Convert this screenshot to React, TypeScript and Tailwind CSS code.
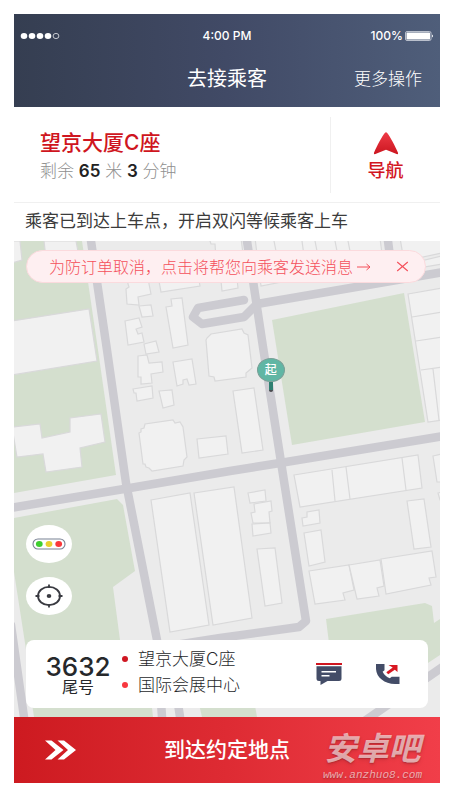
import React from "react";

// ── Map data ─────────────────────────────────────────────────────────────
const PARKS = [
  "14,241 82,241 98,350 116,475 14,493",
  "272,320 404,293 425,422 292,445",
  "14,518 117,499 123,505 135,571 113,587 120,640 128,690 32,690 25,643 14,572",
  "326,619 425,603 432,606 434,623 440,619 440,655 372,700 336,700",
  "30,690 150,690 153,717 34,717",
  "198,700 254,700 257,717 202,717",
];

const ROADS = [
  "M91,241 L107,350 L126,483 L157,640 L162,717",
  "M170,650 L180,717",
  "M10,508 L124,489 L230,471 L280,463 L444,436",
  "M244,300 L198,308 L193,317 L202,324 L244,317 L257,304 L444,272",
  "M247,241 L263,347 L281,462 L306,621 L299,627 L220,638 L150,649",
  "M388,241 L393,280",
  "M444,666 L366,720",
  "M11,625 L24,717",
];

const BUILDINGS = [
  "12,241 20,241 22,260 12,263",
  "44,241 76,241 80,262 47,267",
  "12,321 89,309 97,361 12,375",
  "12,427 40,424 42,438 70,432 70,418 101,414 105,442 80,448 82,467 46,472 43,454 17,457",
  "126,270 128,284 129,287 126,289 127,304 139,305 138,297 151,294 149,284 148,270",
  "157,270 161,292 200,286 197,270",
  "139,306 151,305 153,316 142,317",
  "125,321 139,318 142,327 136,329 138,334 142,333 144,342 128,345",
  "144,344 156,341 159,352 146,354",
  "166,307 172,306 171,299 182,298 188,345 173,348",
  "138,356 147,355 149,363 162,362 163,372 151,374 152,383 141,384 141,377 138,377",
  "133,389 152,386 153,398 137,401 136,393 134,393",
  "173,362 192,359 196,384 189,385 187,379 183,380 183,384 177,386",
  "159,391 172,390 174,405 163,408",
  "139,433 141,432 141,429 144,428 145,424 173,420 175,423 180,422 183,427 187,457 184,460 183,466 152,471 149,468 146,467 145,464 143,464",
  "197,439 226,436 228,454 199,458",
  "206,340 207,338 211,334 242,329 244,333 248,335 252,368 246,373 246,377 215,381 214,377 209,376",
  "233,391 254,388 263,450 242,453",
  "151,500 190,493 209,625 170,632",
  "194,493 234,487 252,618 213,625",
  "248,493 265,490 266,501 250,503",
  "254,504 271,501 272,511 269,512 270,523 253,523 251,513 255,512",
  "252,524 270,523 271,533 253,536",
  "257,549 275,548 282,603 265,606",
  "302,518 307,517 307,512 319,510 320,523 303,526",
  "304,533 321,530 325,562 309,566",
  "407,501 424,499 431,547 414,549",
  "294,475 418,455 422,488 300,507",
  "309,571 349,565 354,590 343,593 345,600 315,604",
  "349,565 380,560 384,586 377,588 379,596 357,599",
  "381,559 432,551 436,577 429,578 431,585 386,594",
  "433,456 442,454 442,482 437,482",
  "438,493 442,492 442,500 440,500",
  "408,294 442,288 442,420 428,422",
  "209,238 211,244 215,244 216,258 244,262 241,238",
  "220,270 222,291 238,288 236,270",
  "255,238 380,238 383,262 261,286",
  "400,238 442,238 442,253 404,261",
  "404,265 442,256 442,264 406,270",
];

const WALLS =
  "M332,470 L335,501 M346,467 L350,499 M402,458 L406,490 M412,317 L442,312 M416,341 L442,337 M421,370 L442,367 M433,369 L439,420 M274,241 L277,256 M302,241 L304,256 M315,241 L318,256 M335,241 L338,256 M348,241 L351,256";

const STOPS = [
  { name: "望京大厦C座", dot: "bg-[#cf1722]" },
  { name: "国际会展中心", dot: "bg-[#f8383f]" },
];

const MapCanvas: React.FC = () => (
  <svg
    viewBox="14 241 426 476"
    preserveAspectRatio="xMidYMid slice"
    className="absolute inset-0 h-full w-full bg-[#ebebeb]"
    aria-hidden="true"
  >
    {PARKS.map((points) => (
      <polygon key={points} points={points} fill="#d4dfce" />
    ))}
    <g fill="none" stroke="#cccbd1" strokeWidth="8.5" strokeLinecap="round" strokeLinejoin="round">
      {ROADS.map((d) => (
        <path key={d} d={d} />
      ))}
    </g>
    <g fill="#f1f1f1" stroke="#d9d9da" strokeWidth="1.2">
      {BUILDINGS.map((points) => (
        <polygon key={points} points={points} />
      ))}
      <path d={WALLS} />
    </g>
  </svg>
);

const PickupPin: React.FC = () => (
  <div className="absolute left-[57%] top-[24.5%] flex flex-col items-center">
    <span className="z-10 flex h-6 w-7 items-center justify-center rounded-[50%] border border-[#7b9f97] bg-[#60b6a4] text-xs font-medium text-white">
      起
    </span>
    <span className="h-2.5 w-1 rounded-b-sm border-b-2 border-[#4b4b4f] bg-[#2f8071]" />
  </div>
);

// ── Header ───────────────────────────────────────────────────────────────
const Header: React.FC = () => (
  <header className="bg-linear-to-r from-[#353e51] via-[#414a66] to-[#4f5e7a] text-white">
    <div className="grid grid-cols-3 items-center px-1.5 pt-3 text-xs leading-5 font-medium">
      <svg width="40" height="8" viewBox="0 0 40 8" fill="#fff" aria-hidden="true">
        <ellipse cx="4" cy="4" rx="3.3" ry="3" />
        <ellipse cx="12" cy="4" rx="3.3" ry="3" />
        <ellipse cx="20" cy="4" rx="3.3" ry="3" />
        <ellipse cx="28" cy="4" rx="3.3" ry="3" />
        <ellipse cx="36" cy="4" rx="2.9" ry="2.6" fill="none" stroke="#fff" strokeWidth="0.7" />
      </svg>
      <span className="text-center">4:00 PM</span>
      <span className="flex items-center justify-end gap-0.5">
        100%
        <svg width="29" height="10" viewBox="0 0 29 10" aria-hidden="true">
          <rect x="0.5" y="0.5" width="25.5" height="9" rx="1.5" fill="none" stroke="#d5d9e2" strokeWidth="0.8" />
          <rect x="1.5" y="1.5" width="23.5" height="7" rx="0.5" fill="#fff" />
          <path d="M27 3.5 Q29 5 27 6.5Z" fill="#fff" />
        </svg>
      </span>
    </div>
    <div className="grid grid-cols-[1fr_auto_1fr] items-center px-[18px] pt-[17px] pb-3">
      <span />
      <h1 className="text-xl leading-8">去接乘客</h1>
      <button type="button" className="justify-self-end text-[17px] leading-8 font-light">
        更多操作
      </button>
    </div>
  </header>
);

const TripSummary: React.FC = () => (
  <section className="flex items-stretch border-b border-[#f0f0f0] pt-2.5 pb-[9px]">
    <div className="flex-1 pt-3 pb-2 pl-[26px]">
      <h2 className="text-[21px] leading-7 font-medium text-[#cf1520]">望京大厦C座</h2>
      <p className="text-[17px] leading-7 font-light text-[#8f8f8f]">
        剩余 <b className="text-[17px] font-semibold text-[#222]">65</b> 米{" "}
        <b className="text-[17px] font-semibold text-[#222]">3</b> 分钟
      </p>
    </div>
    <button
      type="button"
      className="flex w-[110px] flex-col items-center justify-center gap-0.5 border-l border-[#f0f0f0] pt-1.5 text-lg leading-7 font-medium text-[#d2161f]"
    >
      <svg width="26" height="23" viewBox="0 0 26 23" aria-hidden="true">
        <defs>
          <linearGradient id="nav" x1="0" y1="0" x2="0" y2="1">
            <stop offset="0" stopColor="#ee3b46" />
            <stop offset="1" stopColor="#cc1620" />
          </linearGradient>
        </defs>
        <path
          d="M11.8 .9 Q13 -.3 14.2 .9 C17 4.5 22 13.5 25 20.7 Q25.4 22.6 23.6 22 L13.7 17.9 Q13 17.7 12.3 17.9 L2.4 22 Q.6 22.6 1 20.7 C4 13.5 9 4.5 11.8 .9Z"
          fill="url(#nav)"
        />
      </svg>
      导航
    </button>
  </section>
);

const NoticeBanner: React.FC = () => (
  <div className="mr-0.5 flex h-[33px] items-center justify-between rounded-full border border-[#fbdadd] bg-[#feeff1] pr-3 pl-[22px] text-[#f4505b]">
    <button type="button" className="flex items-center gap-1 text-base font-light whitespace-nowrap">
      为防订单取消，点击将帮您向乘客发送消息
      <svg width="14" height="8" viewBox="0 0 14 8" fill="none" stroke="currentColor" aria-hidden="true">
        <path d="M0 4H13M9.5 1L13 4L9.5 7" />
      </svg>
    </button>
    <button type="button" aria-label="关闭" className="px-1">
      <svg width="13" height="11" viewBox="0 0 13 11" fill="none" stroke="currentColor" strokeWidth="1.1">
        <path d="M1.2 1L11.8 10M11.8 1L1.2 10" />
      </svg>
    </button>
  </div>
);

const MapControls: React.FC = () => (
  <div className="flex flex-col items-start gap-3.5">
    <button
      type="button"
      aria-label="路况"
      className="flex h-[38px] w-[46px] items-center justify-center rounded-[50%] bg-white"
    >
      <svg width="34" height="12" viewBox="0 0 34 12">
        <rect x="1" y="1" width="32" height="10" rx="5" fill="#fff" stroke="#798194" strokeWidth="1.1" />
        <ellipse cx="7.3" cy="6" rx="3.4" ry="2.9" fill="#3fce31" />
        <ellipse cx="17" cy="6" rx="3.4" ry="2.9" fill="#ead02f" />
        <ellipse cx="26.7" cy="6" rx="3.4" ry="2.9" fill="#f9383b" />
      </svg>
    </button>
    <button
      type="button"
      aria-label="定位"
      className="flex h-[38px] w-[46px] items-center justify-center rounded-[50%] bg-white"
    >
      <svg width="28" height="24" viewBox="0 0 28 24" fill="none" stroke="#393a41" strokeWidth="1.8">
        <ellipse cx="14" cy="12" rx="11" ry="9.2" />
        <path d="M14 .5V4M14 20V23.5M.5 12H4.5M23.5 12H27.5" />
        <ellipse cx="14" cy="12" rx="2.3" ry="2" fill="#393a41" stroke="none" />
      </svg>
    </button>
  </div>
);

const PassengerCard: React.FC = () => (
  <section className="flex h-[68px] items-center rounded-lg bg-white pl-4 text-[#26282b]">
    <div className="flex w-[72px] flex-col items-center pt-0.5">
      <strong className="text-[26px] leading-6 font-medium">3632</strong>
      <span className="text-base leading-4">尾号</span>
    </div>
    <ul className="flex-1 pb-1 pl-2 text-[17px] leading-[26px] font-light">
      {STOPS.map((stop) => (
        <li key={stop.name} className="flex items-center gap-2.5">
          <span className={`h-1.5 w-1.5 rounded-full ${stop.dot}`} />
          {stop.name}
        </li>
      ))}
    </ul>
    <div className="flex items-center gap-[34px] pr-7">
      <button type="button" aria-label="发消息">
        <svg width="26" height="22" viewBox="0 0 26 22">
          <path d="M0 0H26V2H0Z" fill="#d01620" />
          <path d="M.5 3.3H25.5V15.5Q25.5 18 23 18H11.5L4.5 22V18H3Q.5 18 .5 15.5Z" fill="#434c67" />
          <path d="M5.5 8.7H20M5.5 12.7H13.5" stroke="#fff" strokeWidth="1.4" />
        </svg>
      </button>
      <button type="button" aria-label="打电话">
        <svg width="24" height="22" viewBox="0 0 24 22">
          <path
            d="M0 1H8.5V7.2L6.6 8.8C8.2 12 10.8 14.2 13.8 15.2L15.7 13.7H23.5V21H19C8.5 20.8 .4 14.5 0 6Z"
            fill="#434c67"
          />
          <path d="M12.5 2H21.5V9L18.8 6.8L12.2 11.2L10.3 9.2L16.7 4.6Z" fill="#d81722" />
        </svg>
      </button>
    </div>
  </section>
);

const ArriveBar: React.FC = () => (
  <footer className="relative">
    <button
      type="button"
      className="grid h-[66px] w-full grid-cols-[1fr_auto_1fr] items-center bg-linear-to-r from-[#cd1a20] via-[#de2b33] to-[#f13e49] pl-[31px] text-[21px] font-medium text-white"
    >
      <svg width="31" height="20" viewBox="0 0 31 20" fill="#fff" aria-hidden="true">
        <path d="M0 .5H6.5L18.5 10L6.5 19.5H0L10.5 10Z" />
        <path d="M12.5 .5H19L31 10L19 19.5H12.5L23 10Z" />
      </svg>
      <span className="pr-[31px]">到达约定地点</span>
    </button>
    <div className="pointer-events-none absolute right-[18px] bottom-0.5 flex flex-col items-center font-bold text-white/60 italic text-shadow-md">
      <p className="text-[32px] leading-10">安卓吧</p>
      <p className="font-['Liberation_Mono',monospace] text-[11px] leading-3 font-normal">www.anzhuo8.com</p>
    </div>
  </footer>
);

export default function App() {
  return (
    <div className="flex min-h-screen flex-col bg-white pt-3.5 pr-2.5 pb-[17px] pl-3.5 font-[Inter,'Noto_Sans_CJK_SC',sans-serif]">
      <Header />
      <TripSummary />
      <p className="pt-1 pb-1.5 pl-[11px] text-[17px] leading-7 whitespace-nowrap text-[#3c3c3c]">
        乘客已到达上车点，开启双闪等候乘客上车
      </p>
      <main className="relative flex-1 overflow-hidden">
        <MapCanvas />
        <PickupPin />
        <div className="relative flex h-full flex-col px-3 pt-[9px] pb-[9px]">
          <NoticeBanner />
          <div className="mt-[242px] mb-[25px]">
            <MapControls />
          </div>
          <PassengerCard />
        </div>
      </main>
      <ArriveBar />
    </div>
  );
}
